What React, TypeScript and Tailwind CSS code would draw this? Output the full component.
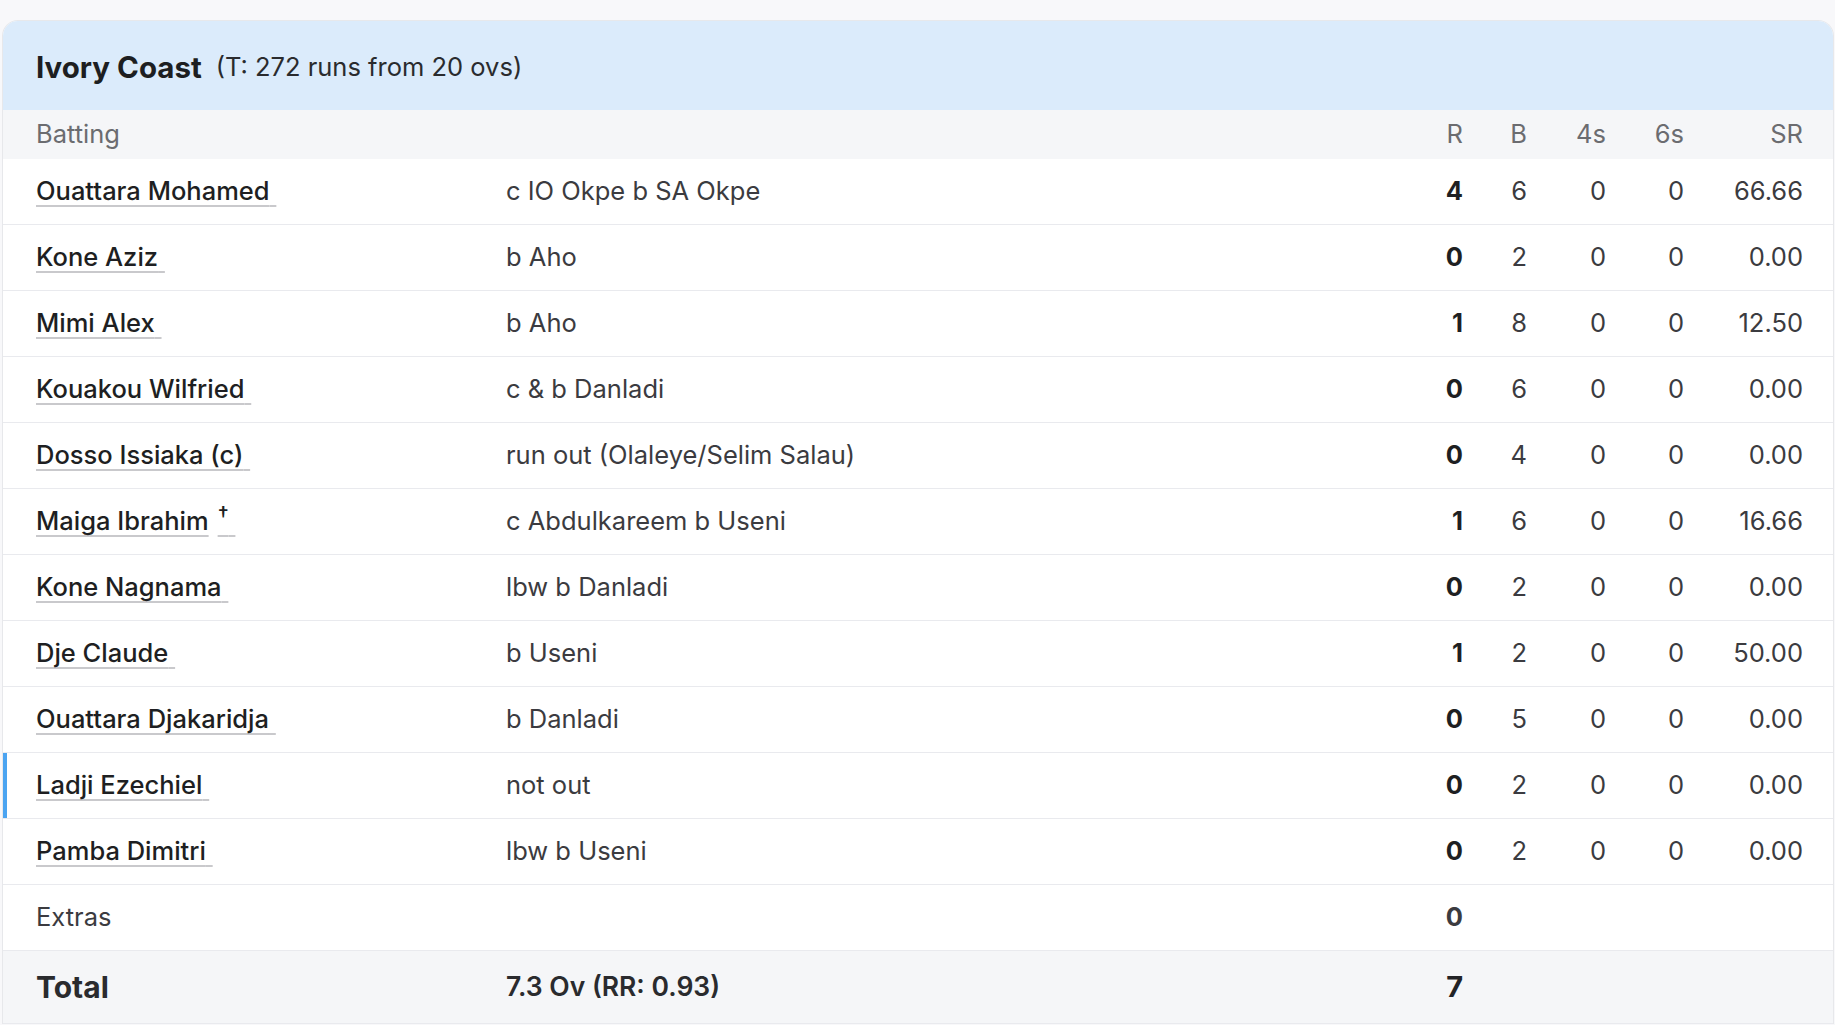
import React from 'react'

type Batter = {
  name: string
  keeper?: boolean
  dismissal: string
  r: number
  b: number
  fours: number
  sixes: number
  sr: string
  active?: boolean
}

const batters: Batter[] = [
  { name: 'Ouattara Mohamed', dismissal: 'c IO Okpe b SA Okpe', r: 4, b: 6, fours: 0, sixes: 0, sr: '66.66' },
  { name: 'Kone Aziz', dismissal: 'b Aho', r: 0, b: 2, fours: 0, sixes: 0, sr: '0.00' },
  { name: 'Mimi Alex', dismissal: 'b Aho', r: 1, b: 8, fours: 0, sixes: 0, sr: '12.50' },
  { name: 'Kouakou Wilfried', dismissal: 'c & b Danladi', r: 0, b: 6, fours: 0, sixes: 0, sr: '0.00' },
  { name: 'Dosso Issiaka (c)', dismissal: 'run out (Olaleye/Selim Salau)', r: 0, b: 4, fours: 0, sixes: 0, sr: '0.00' },
  { name: 'Maiga Ibrahim', keeper: true, dismissal: 'c Abdulkareem b Useni', r: 1, b: 6, fours: 0, sixes: 0, sr: '16.66' },
  { name: 'Kone Nagnama', dismissal: 'lbw b Danladi', r: 0, b: 2, fours: 0, sixes: 0, sr: '0.00' },
  { name: 'Dje Claude', dismissal: 'b Useni', r: 1, b: 2, fours: 0, sixes: 0, sr: '50.00' },
  { name: 'Ouattara Djakaridja', dismissal: 'b Danladi', r: 0, b: 5, fours: 0, sixes: 0, sr: '0.00' },
  { name: 'Ladji Ezechiel', dismissal: 'not out', r: 0, b: 2, fours: 0, sixes: 0, sr: '0.00', active: true },
  { name: 'Pamba Dimitri', dismissal: 'lbw b Useni', r: 0, b: 2, fours: 0, sixes: 0, sr: '0.00' },
]

// same column template for every row so numbers line up
const cols = 'grid grid-cols-[470px_1fr_60px_64px_79px_78px_119px] items-center pl-[33px] pr-[30px]'

function BatterRow({ p }: { p: Batter }) {
  return (
    <div
      className={`${cols} h-[66px] border-b border-[#e9eaee] text-[25.5px] text-[#3b3b40] ${
        p.active ? 'shadow-[inset_4px_0_0_#4ba4f1]' : ''
      }`}
    >
      <div className="font-medium text-[#1e1f22]">
        <a
          href="#"
          className="underline decoration-[#c9c9cc] decoration-2 underline-offset-[5px]"
        >
          {p.name}
          {p.keeper && <span className="relative -top-[8px] ml-[9px] text-[21px]">†</span>}
          {'\u00a0'}
        </a>
      </div>
      <div>{p.dismissal}</div>
      <div className="text-right font-bold text-[#1e1f22]">{p.r}</div>
      <div className="text-right">{p.b}</div>
      <div className="text-right">{p.fours}</div>
      <div className="text-right">{p.sixes}</div>
      <div className="text-right">{p.sr}</div>
    </div>
  )
}

function App() {
  return (
    <div
      className="min-h-screen bg-[#f8f8fa] pt-[20px] pl-[2px] pr-[1px]"
      style={{ fontFamily: 'Inter, "Noto Sans", "Liberation Sans", sans-serif' }}
    >
      <div className="rounded-t-[16px] border border-b-0 border-[#e7e8eb] bg-white overflow-hidden">
        <div className="h-[89px] bg-[#dbebfb] flex items-center gap-[14px] pl-[33px] pt-[4px]">
          <h2 className="text-[29.5px] font-bold text-[#1d1e21]">Ivory Coast</h2>
          <span className="text-[25.5px] text-[#2a2b2e]">(T: 272 runs from 20 ovs)</span>
        </div>

        <div className={`${cols} h-[49px] bg-[#f5f6f8] text-[25.5px] text-[#6b6c70]`}>
          <div>Batting</div>
          <div></div>
          <div className="text-right">R</div>
          <div className="text-right">B</div>
          <div className="text-right">4s</div>
          <div className="text-right">6s</div>
          <div className="text-right">SR</div>
        </div>

        {batters.map((p) => (
          <BatterRow key={p.name} p={p} />
        ))}

        <div className={`${cols} h-[66px] border-b border-[#e9eaee] text-[25.5px]`}>
          <div className="text-[#3b3b40]">Extras</div>
          <div></div>
          <div className="text-right font-bold text-[#3b3b40]">0</div>
        </div>

        <div className={`${cols} h-[73px] bg-[#f5f6f8] border-b border-[#e9eaee]`}>
          <div className="text-[30px] font-bold text-[#2a2b2e]">Total</div>
          <div className="text-[26.5px] font-semibold text-[#2a2b2e]">7.3 Ov (RR: 0.93)</div>
          <div className="text-right text-[29px] font-bold text-[#222326]">7</div>
        </div>
      </div>
    </div>
  )
}

export default App
